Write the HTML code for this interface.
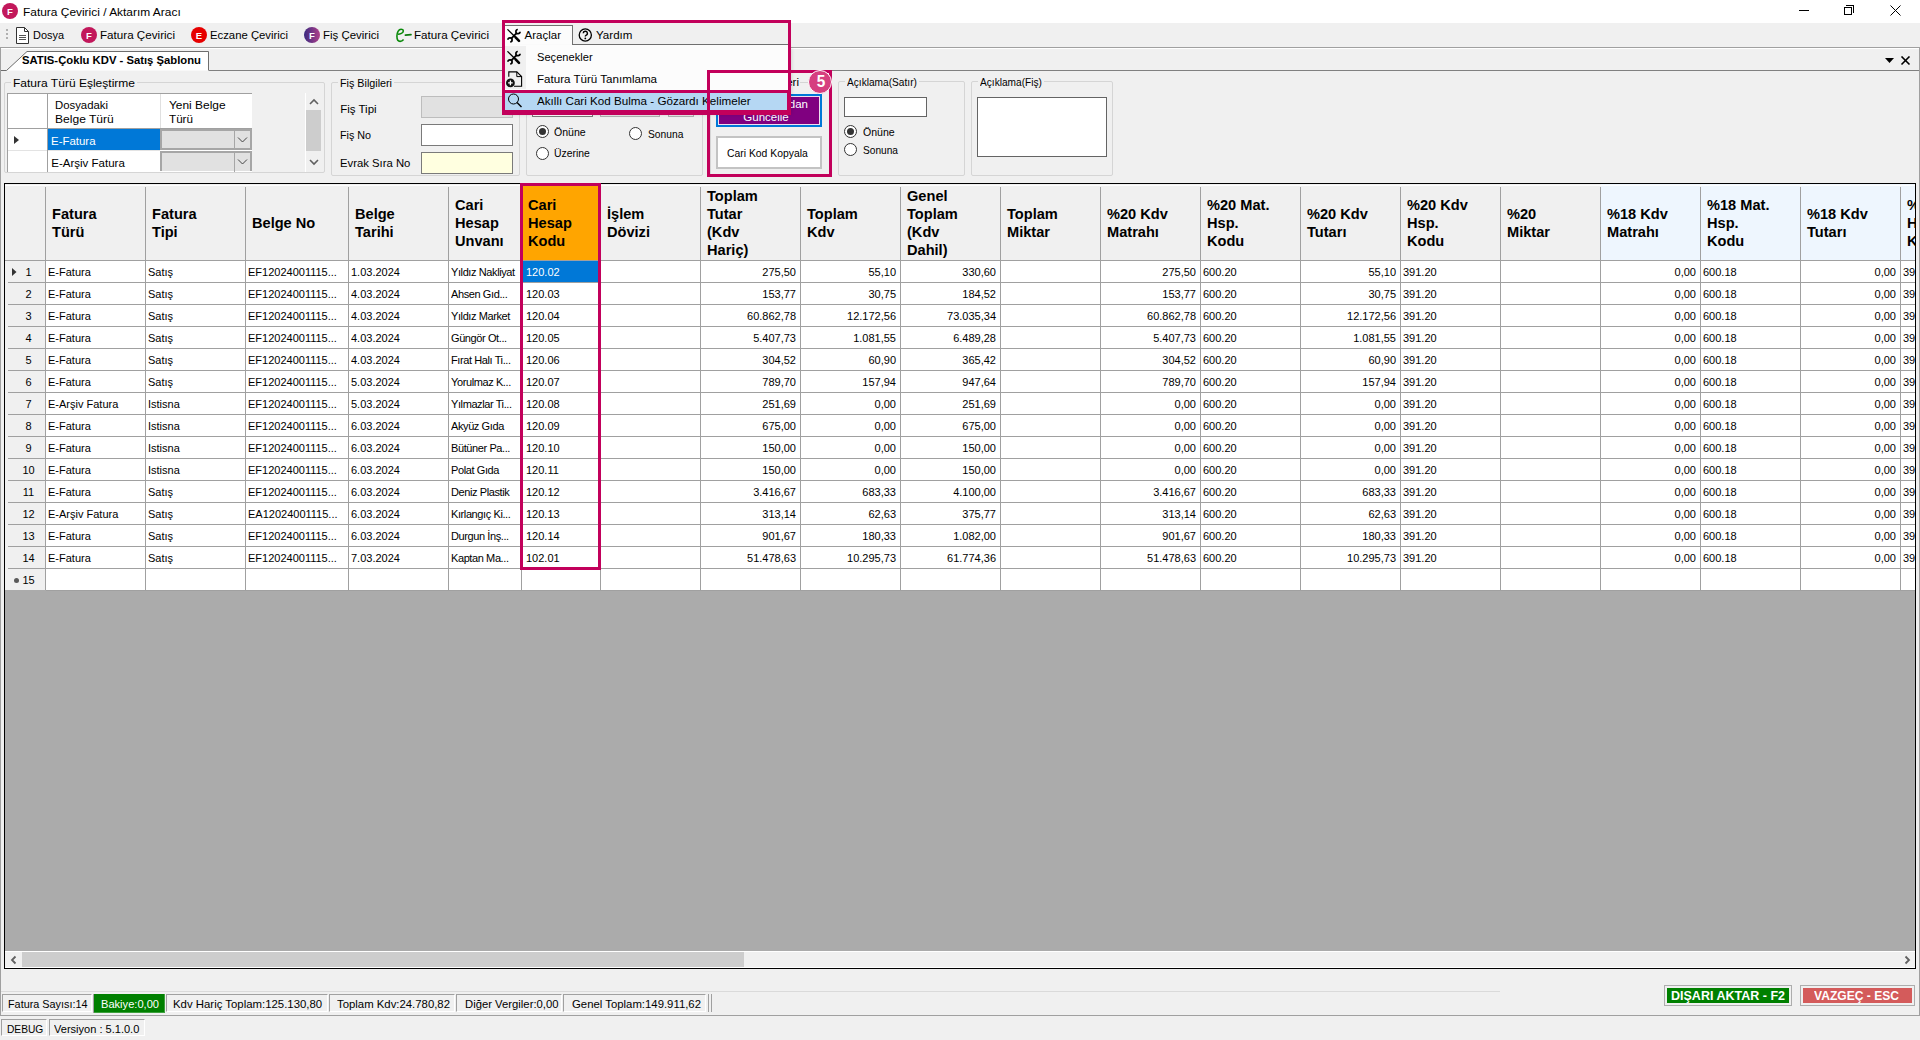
<!DOCTYPE html><html><head><meta charset="utf-8"><style>
html,body{margin:0;padding:0;}
body{width:1920px;height:1040px;overflow:hidden;position:relative;background:#f0f0f0;font-family:"Liberation Sans",sans-serif;color:#000;}
div{position:absolute;box-sizing:border-box;}
.t{white-space:nowrap;}
svg{position:absolute;}

</style></head><body>
<div style="left:0px;top:0px;width:1920px;height:23px;background:#fff;"></div>
<div style="left:2px;top:3px;width:16px;height:16px;border-radius:50%;background:#c2185b;"></div>
<div class="t" style="left:2px;top:3px;width:16px;text-align:center;font-weight:bold;font-size:9.5px;line-height:17px;color:#fff;">F</div>
<div class="t" style="left:23px;top:3.61px;font-size:11.5px;line-height:16px;transform:scaleX(1.0368);transform-origin:0 0;">Fatura Çevirici / Aktarım Aracı</div>
<div style="left:1799px;top:10px;width:10px;height:1px;background:#000;"></div>
<div style="left:1844px;top:7px;width:8px;height:8px;border:1px solid #000;"></div>
<div style="left:1846px;top:5px;width:8px;height:8px;border-top:1px solid #000;border-right:1px solid #000;"></div>
<svg style="left:1890px;top:5px" width="11" height="11"><path d="M0.5 0.5L10.5 10.5M10.5 0.5L0.5 10.5" stroke="#000" stroke-width="1"/></svg>
<div style="left:6px;top:29px;width:2px;height:2px;background:#b0b0b0;"></div>
<div style="left:6px;top:33px;width:2px;height:2px;background:#b0b0b0;"></div>
<div style="left:6px;top:37px;width:2px;height:2px;background:#b0b0b0;"></div>
<svg style="left:16px;top:27px" width="13" height="17"><path d="M0.5 0.5H8.5L12.5 4.5V16.5H0.5Z" fill="#fff" stroke="#333" stroke-width="1"/><path d="M8.5 0.5V4.5H12.5" fill="none" stroke="#333"/><path d="M3 8.5H10M3 10.5H10M3 12.5H10" stroke="#555" stroke-width="1"/></svg>
<div class="t" style="left:33px;top:26.81px;font-size:11.5px;line-height:16px;transform:scaleX(0.9506);transform-origin:0 0;">Dosya</div>
<div style="left:81px;top:27px;width:16px;height:16px;border-radius:50%;background:#c2185b;"></div>
<div class="t" style="left:81px;top:27px;width:16px;text-align:center;font-weight:bold;font-size:9.5px;line-height:17px;color:#fff;">F</div>
<div class="t" style="left:100px;top:26.81px;font-size:11.5px;line-height:16px;transform:scaleX(1.0116);transform-origin:0 0;">Fatura Çevirici</div>
<div style="left:191px;top:27px;width:16px;height:16px;border-radius:50%;background:#e60000;"></div>
<div class="t" style="left:191px;top:27px;width:16px;text-align:center;font-weight:bold;font-size:9.5px;line-height:17px;color:#fff;">E</div>
<div class="t" style="left:210px;top:26.81px;font-size:11.5px;line-height:16px;transform:scaleX(0.9842);transform-origin:0 0;">Eczane Çevirici</div>
<div style="left:304px;top:27px;width:16px;height:16px;border-radius:50%;background:linear-gradient(90deg,#3a2a80,#b0408a);"></div>
<div class="t" style="left:304px;top:27px;width:16px;text-align:center;font-weight:bold;font-size:9.5px;line-height:17px;color:#fff;">F</div>
<div class="t" style="left:323px;top:26.81px;font-size:11.5px;line-height:16px;transform:scaleX(0.9958);transform-origin:0 0;">Fiş Çevirici</div>
<svg style="left:395px;top:28px" width="17" height="15"><path d="M3 6.3C5 6.3 8.3 5 8.3 2.9C8.3 1.6 7.2 1.2 6.1 1.2C3.6 1.2 1.9 4.5 1.9 8C1.9 11.5 3.1 13.4 5.1 13.4C6.6 13.4 7.8 12.6 8.6 11.6" fill="none" stroke="#0b8a0b" stroke-width="1.6"/><path d="M10.4 7.1L16 6.6" stroke="#0b7a0b" stroke-width="1.7" stroke-linecap="round"/></svg>
<div class="t" style="left:414px;top:26.81px;font-size:11.5px;line-height:16px;transform:scaleX(1.0116);transform-origin:0 0;">Fatura Çevirici</div>
<div style="left:0px;top:47px;width:1920px;height:969px;border:1px solid #a0a0a0;"></div>
<div style="left:1px;top:48px;width:1918px;height:1px;background:#fff;"></div>
<svg style="left:0;top:47px" width="220" height="26"><path d="M1 23.5H6.5L27 4.5H208.5V23.5" fill="#fff" stroke="none"/><path d="M1 23.5H6.5L27 4.5H208.5V23.5" fill="none" stroke="#6d6d6d" stroke-width="1"/></svg>
<div style="left:209px;top:70px;width:1710px;height:1px;background:#808080;"></div>
<div class="t" style="left:22px;top:51.68px;font-size:11.6px;line-height:16px;font-weight:bold;transform:scaleX(0.9727);transform-origin:0 0;">SATIS-Çoklu KDV - Satış Şablonu</div>
<svg style="left:1884px;top:56px" width="28" height="10"><path d="M1 2H10L5.5 7Z" fill="#000"/><path d="M17.5 0.5L25.5 8.5M25.5 0.5L17.5 8.5" stroke="#000" stroke-width="1.6"/></svg>
<div style="left:4px;top:82px;width:321px;height:91px;border:1px solid #d5d5d5;border-radius:2px;"></div>
<div style="left:11px;top:80px;width:126px;height:5px;background:#f0f0f0;"></div>
<div class="t" style="left:13px;top:75.11px;font-size:11.5px;line-height:16px;transform:scaleX(1.045);transform-origin:0 0;">Fatura Türü Eşleştirme</div>
<div style="left:7px;top:93px;width:245px;height:79px;background:#fff;border-top:1px solid #a0a0a0;border-left:1px solid #a0a0a0;"></div>
<div style="left:47px;top:94px;width:1px;height:78px;background:#a0a0a0;"></div>
<div style="left:160px;top:94px;width:1px;height:34px;background:#e0e0e0;"></div>
<div style="left:8px;top:128px;width:244px;height:1px;background:#a0a0a0;"></div>
<div class="t" style="left:55.4px;top:97.01px;font-size:11.5px;line-height:16px;transform:scaleX(0.9869);transform-origin:0 0;">Dosyadaki</div>
<div class="t" style="left:55.4px;top:110.91px;font-size:11.5px;line-height:16px;transform:scaleX(1.0491);transform-origin:0 0;">Belge Türü</div>
<div class="t" style="left:169px;top:97.01px;font-size:11.5px;line-height:16px;transform:scaleX(1.037);transform-origin:0 0;">Yeni Belge</div>
<div class="t" style="left:169px;top:110.91px;font-size:11.5px;line-height:16px;transform:scaleX(1.0145);transform-origin:0 0;">Türü</div>
<div style="left:48px;top:129px;width:112px;height:21px;background:#0078d7;"></div>
<div class="t" style="left:51.3px;top:133.41px;font-size:11.5px;line-height:16px;transform:scaleX(0.9944);transform-origin:0 0;color:#fff;">E-Fatura</div>
<div style="left:8px;top:150px;width:39px;height:1px;background:#e3e3e3;"></div>
<div style="left:48px;top:150px;width:112px;height:1px;background:#e3e3e3;"></div>
<div class="t" style="left:51.3px;top:154.71px;font-size:11.5px;line-height:16px;">E-Arşiv Fatura</div>
<svg style="left:13px;top:135px" width="8" height="10"><path d="M1 1L6 5L1 9Z" fill="#333"/></svg>
<div style="left:160px;top:129px;width:92px;height:21px;background:#e1e1e1;border:2px solid #a6a6a6;"></div>
<div style="left:234px;top:131px;width:1px;height:19px;background:#a6a6a6;"></div>
<svg style="left:237px;top:136px" width="12" height="8"><path d="M1 1.5L5.5 6L10 1.5" fill="none" stroke="#444" stroke-width="1"/></svg>
<div style="left:160px;top:151px;width:92px;height:20px;background:#e1e1e1;border:2px solid #a6a6a6;border-bottom:0;"></div>
<div style="left:234px;top:153px;width:1px;height:19px;background:#a6a6a6;"></div>
<svg style="left:237px;top:158px" width="12" height="8"><path d="M1 1.5L5.5 6L10 1.5" fill="none" stroke="#444" stroke-width="1"/></svg>
<div style="left:305px;top:93px;width:16px;height:79px;background:#f0f0f0;border-left:1px solid #fff;"></div>
<div style="left:306px;top:110px;width:15px;height:41px;background:#cdcdcd;"></div>
<svg style="left:308px;top:98px" width="12" height="8"><path d="M2 6L6 2L10 6" fill="none" stroke="#606060" stroke-width="1.6"/></svg>
<svg style="left:308px;top:158px" width="12" height="8"><path d="M2 2L6 6L10 2" fill="none" stroke="#606060" stroke-width="1.6"/></svg>
<div style="left:331px;top:82px;width:189px;height:94px;border:1px solid #d5d5d5;border-radius:2px;"></div>
<div style="left:338px;top:80px;width:56px;height:5px;background:#f0f0f0;"></div>
<div class="t" style="left:340px;top:75.11px;font-size:11.5px;line-height:16px;transform:scaleX(0.9354);transform-origin:0 0;">Fiş Bilgileri</div>
<div class="t" style="left:340.2px;top:101.11px;font-size:11.5px;line-height:16px;">Fiş Tipi</div>
<div class="t" style="left:340.2px;top:127.01px;font-size:11.5px;line-height:16px;transform:scaleX(0.9358);transform-origin:0 0;">Fiş No</div>
<div class="t" style="left:340.2px;top:154.71px;font-size:11.5px;line-height:16px;transform:scaleX(0.9835);transform-origin:0 0;">Evrak Sıra No</div>
<div style="left:421px;top:96px;width:92px;height:22px;background:#e1e1e1;border:1px solid #bdbdbd;"></div>
<div style="left:421px;top:124px;width:92px;height:22px;background:#fff;border:1px solid #7a7a7a;"></div>
<div style="left:421px;top:152px;width:92px;height:22px;background:#ffffe0;border:1px solid #7a7a7a;"></div>
<div style="left:526px;top:82px;width:177px;height:94px;border:1px solid #d5d5d5;border-radius:2px;"></div>
<div style="left:532px;top:97px;width:61px;height:20px;background:#fff;border:1px solid #7a7a7a;"></div>
<div style="left:600px;top:97px;width:60px;height:20px;background:#e8e8e8;border:1px solid #b0b0b0;"></div>
<div style="left:668px;top:97px;width:26px;height:20px;background:#e8e8e8;border:1px solid #b0b0b0;"></div>
<div style="left:536.0px;top:125.0px;width:13px;height:13px;border:1px solid #333;border-radius:50%;background:#fff;"></div>
<div style="left:539.0px;top:128.0px;width:7px;height:7px;border-radius:50%;background:#333;"></div>
<div class="t" style="left:554.4px;top:123.81px;font-size:11.5px;line-height:16px;transform:scaleX(0.918);transform-origin:0 0;">Önüne</div>
<div style="left:629.0px;top:127.0px;width:13px;height:13px;border:1px solid #333;border-radius:50%;background:#fff;"></div>
<div class="t" style="left:647.6px;top:125.91px;font-size:11.5px;line-height:16px;transform:scaleX(0.8927);transform-origin:0 0;">Sonuna</div>
<div style="left:536.0px;top:147.0px;width:13px;height:13px;border:1px solid #333;border-radius:50%;background:#fff;"></div>
<div class="t" style="left:554.4px;top:145.41px;font-size:11.5px;line-height:16px;transform:scaleX(0.9056);transform-origin:0 0;">Üzerine</div>
<div style="left:710px;top:82px;width:120px;height:94px;border:1px solid #d5d5d5;border-radius:2px;"></div>
<div class="t" style="left:741px;top:74px;width:59px;text-align:right;font-size:11.5px;line-height:16px;background:#f0f0f0;padding-right:1px;">İşlemleri</div>
<div style="left:716px;top:94px;width:106px;height:33px;background:#800080;border:2px solid #0078d7;box-shadow:inset 0 0 0 1px #f0e0f0;"></div>
<div class="t" style="left:700px;top:95.5px;width:108px;text-align:right;font-size:11.5px;line-height:16px;color:#fff;">Koddan</div>
<div class="t" style="left:713px;top:108.5px;width:106px;text-align:center;font-size:11.5px;line-height:16px;color:#fff;">Güncelle</div>
<div style="left:716px;top:136px;width:106px;height:33px;background:#fff;border:2px solid #c3c3c3;"></div>
<div class="t" style="left:727.4px;top:144.89px;font-size:11px;line-height:16px;transform:scaleX(0.9438);transform-origin:0 0;">Cari Kod Kopyala</div>
<div style="left:838px;top:81px;width:127px;height:95px;border:1px solid #d5d5d5;border-radius:2px;"></div>
<div style="left:845.2px;top:79px;width:73.9px;height:5px;background:#f0f0f0;"></div>
<div class="t" style="left:847.2px;top:73.61px;font-size:11.5px;line-height:16px;transform:scaleX(0.882);transform-origin:0 0;">Açıklama(Satır)</div>
<div style="left:844px;top:97px;width:83px;height:20px;background:#fff;border:1px solid #646464;"></div>
<div style="left:844.0px;top:125.0px;width:13px;height:13px;border:1px solid #333;border-radius:50%;background:#fff;"></div>
<div style="left:847.0px;top:128.0px;width:7px;height:7px;border-radius:50%;background:#333;"></div>
<div class="t" style="left:862.5px;top:123.61px;font-size:11.5px;line-height:16px;transform:scaleX(0.918);transform-origin:0 0;">Önüne</div>
<div style="left:844.0px;top:143.0px;width:13px;height:13px;border:1px solid #333;border-radius:50%;background:#fff;"></div>
<div class="t" style="left:862.5px;top:141.81px;font-size:11.5px;line-height:16px;transform:scaleX(0.8826);transform-origin:0 0;">Sonuna</div>
<div style="left:971px;top:81px;width:142px;height:95px;border:1px solid #d5d5d5;border-radius:2px;"></div>
<div style="left:978.3px;top:79px;width:65.9px;height:5px;background:#f0f0f0;"></div>
<div class="t" style="left:980.3px;top:73.61px;font-size:11.5px;line-height:16px;transform:scaleX(0.8807);transform-origin:0 0;">Açıklama(Fiş)</div>
<div style="left:977px;top:97px;width:130px;height:60px;background:#fff;border:1px solid #646464;"></div>
<div style="left:4px;top:183px;width:1912px;height:786px;border:1px solid #000;background:#ababab;overflow:hidden;"></div>
<div style="left:5px;top:184px;width:40px;height:76px;background:#f0f0f0;"></div>
<div style="position:absolute;left:5px;top:184px;width:1910px;height:784px;overflow:hidden;">
<div style="position:absolute;left:0px;top:0px;width:1910px;height:76px;background:#f0f0f0;"></div>
<div style="position:absolute;left:41px;top:0px;width:99px;height:76px;background:#f0f0f0;"></div>
<div style="position:absolute;left:47px;top:20.5px;width:92px;height:36px;font-weight:bold;font-size:14.6px;line-height:18px;white-space:nowrap;">Fatura<br>Türü</div>
<div style="position:absolute;left:40px;top:3px;width:1px;height:73px;background:#a0a0a0;"></div>
<div style="position:absolute;left:141px;top:0px;width:99px;height:76px;background:#f0f0f0;"></div>
<div style="position:absolute;left:147px;top:20.5px;width:92px;height:36px;font-weight:bold;font-size:14.6px;line-height:18px;white-space:nowrap;">Fatura<br>Tipi</div>
<div style="position:absolute;left:140px;top:3px;width:1px;height:73px;background:#a0a0a0;"></div>
<div style="position:absolute;left:241px;top:0px;width:102px;height:76px;background:#f0f0f0;"></div>
<div style="position:absolute;left:247px;top:29.5px;width:95px;height:18px;font-weight:bold;font-size:14.6px;line-height:18px;white-space:nowrap;">Belge No</div>
<div style="position:absolute;left:240px;top:3px;width:1px;height:73px;background:#a0a0a0;"></div>
<div style="position:absolute;left:344px;top:0px;width:99px;height:76px;background:#f0f0f0;"></div>
<div style="position:absolute;left:350px;top:20.5px;width:92px;height:36px;font-weight:bold;font-size:14.6px;line-height:18px;white-space:nowrap;">Belge<br>Tarihi</div>
<div style="position:absolute;left:343px;top:3px;width:1px;height:73px;background:#a0a0a0;"></div>
<div style="position:absolute;left:444px;top:0px;width:72px;height:76px;background:#f0f0f0;"></div>
<div style="position:absolute;left:450px;top:11.5px;width:65px;height:54px;font-weight:bold;font-size:14.6px;line-height:18px;white-space:nowrap;">Cari<br>Hesap<br>Unvanı</div>
<div style="position:absolute;left:443px;top:3px;width:1px;height:73px;background:#a0a0a0;"></div>
<div style="position:absolute;left:517px;top:0px;width:78px;height:76px;background:#ffa500;"></div>
<div style="position:absolute;left:523px;top:11.5px;width:71px;height:54px;font-weight:bold;font-size:14.6px;line-height:18px;white-space:nowrap;">Cari<br>Hesap<br>Kodu</div>
<div style="position:absolute;left:516px;top:3px;width:1px;height:73px;background:#a0a0a0;"></div>
<div style="position:absolute;left:596px;top:0px;width:99px;height:76px;background:#f0f0f0;"></div>
<div style="position:absolute;left:602px;top:20.5px;width:92px;height:36px;font-weight:bold;font-size:14.6px;line-height:18px;white-space:nowrap;">İşlem<br>Dövizi</div>
<div style="position:absolute;left:595px;top:3px;width:1px;height:73px;background:#a0a0a0;"></div>
<div style="position:absolute;left:696px;top:0px;width:99px;height:76px;background:#f0f0f0;"></div>
<div style="position:absolute;left:702px;top:2.5px;width:92px;height:72px;font-weight:bold;font-size:14.6px;line-height:18px;white-space:nowrap;">Toplam<br>Tutar<br>(Kdv<br>Hariç)</div>
<div style="position:absolute;left:695px;top:3px;width:1px;height:73px;background:#a0a0a0;"></div>
<div style="position:absolute;left:796px;top:0px;width:99px;height:76px;background:#f0f0f0;"></div>
<div style="position:absolute;left:802px;top:20.5px;width:92px;height:36px;font-weight:bold;font-size:14.6px;line-height:18px;white-space:nowrap;">Toplam<br>Kdv</div>
<div style="position:absolute;left:795px;top:3px;width:1px;height:73px;background:#a0a0a0;"></div>
<div style="position:absolute;left:896px;top:0px;width:99px;height:76px;background:#f0f0f0;"></div>
<div style="position:absolute;left:902px;top:2.5px;width:92px;height:72px;font-weight:bold;font-size:14.6px;line-height:18px;white-space:nowrap;">Genel<br>Toplam<br>(Kdv<br>Dahil)</div>
<div style="position:absolute;left:895px;top:3px;width:1px;height:73px;background:#a0a0a0;"></div>
<div style="position:absolute;left:996px;top:0px;width:99px;height:76px;background:#f0f0f0;"></div>
<div style="position:absolute;left:1002px;top:20.5px;width:92px;height:36px;font-weight:bold;font-size:14.6px;line-height:18px;white-space:nowrap;">Toplam<br>Miktar</div>
<div style="position:absolute;left:995px;top:3px;width:1px;height:73px;background:#a0a0a0;"></div>
<div style="position:absolute;left:1096px;top:0px;width:99px;height:76px;background:#f0f0f0;"></div>
<div style="position:absolute;left:1102px;top:20.5px;width:92px;height:36px;font-weight:bold;font-size:14.6px;line-height:18px;white-space:nowrap;">%20 Kdv<br>Matrahı</div>
<div style="position:absolute;left:1095px;top:3px;width:1px;height:73px;background:#a0a0a0;"></div>
<div style="position:absolute;left:1196px;top:0px;width:99px;height:76px;background:#f0f0f0;"></div>
<div style="position:absolute;left:1202px;top:11.5px;width:92px;height:54px;font-weight:bold;font-size:14.6px;line-height:18px;white-space:nowrap;">%20 Mat.<br>Hsp.<br>Kodu</div>
<div style="position:absolute;left:1195px;top:3px;width:1px;height:73px;background:#a0a0a0;"></div>
<div style="position:absolute;left:1296px;top:0px;width:99px;height:76px;background:#f0f0f0;"></div>
<div style="position:absolute;left:1302px;top:20.5px;width:92px;height:36px;font-weight:bold;font-size:14.6px;line-height:18px;white-space:nowrap;">%20 Kdv<br>Tutarı</div>
<div style="position:absolute;left:1295px;top:3px;width:1px;height:73px;background:#a0a0a0;"></div>
<div style="position:absolute;left:1396px;top:0px;width:99px;height:76px;background:#f0f0f0;"></div>
<div style="position:absolute;left:1402px;top:11.5px;width:92px;height:54px;font-weight:bold;font-size:14.6px;line-height:18px;white-space:nowrap;">%20 Kdv<br>Hsp.<br>Kodu</div>
<div style="position:absolute;left:1395px;top:3px;width:1px;height:73px;background:#a0a0a0;"></div>
<div style="position:absolute;left:1496px;top:0px;width:99px;height:76px;background:#f0f0f0;"></div>
<div style="position:absolute;left:1502px;top:20.5px;width:92px;height:36px;font-weight:bold;font-size:14.6px;line-height:18px;white-space:nowrap;">%20<br>Miktar</div>
<div style="position:absolute;left:1495px;top:3px;width:1px;height:73px;background:#a0a0a0;"></div>
<div style="position:absolute;left:1596px;top:0px;width:99px;height:76px;background:#eef6fe;"></div>
<div style="position:absolute;left:1602px;top:20.5px;width:92px;height:36px;font-weight:bold;font-size:14.6px;line-height:18px;white-space:nowrap;">%18 Kdv<br>Matrahı</div>
<div style="position:absolute;left:1595px;top:3px;width:1px;height:73px;background:#a0a0a0;"></div>
<div style="position:absolute;left:1696px;top:0px;width:99px;height:76px;background:#eef6fe;"></div>
<div style="position:absolute;left:1702px;top:11.5px;width:92px;height:54px;font-weight:bold;font-size:14.6px;line-height:18px;white-space:nowrap;">%18 Mat.<br>Hsp.<br>Kodu</div>
<div style="position:absolute;left:1695px;top:3px;width:1px;height:73px;background:#a0a0a0;"></div>
<div style="position:absolute;left:1796px;top:0px;width:99px;height:76px;background:#eef6fe;"></div>
<div style="position:absolute;left:1802px;top:20.5px;width:92px;height:36px;font-weight:bold;font-size:14.6px;line-height:18px;white-space:nowrap;">%18 Kdv<br>Tutarı</div>
<div style="position:absolute;left:1795px;top:3px;width:1px;height:73px;background:#a0a0a0;"></div>
<div style="position:absolute;left:1896px;top:0px;width:99px;height:76px;background:#eef6fe;"></div>
<div style="position:absolute;left:1902px;top:11.5px;width:92px;height:54px;font-weight:bold;font-size:14.6px;line-height:18px;white-space:nowrap;">%18 Kdv<br>Hsp.<br>Kodu</div>
<div style="position:absolute;left:1895px;top:3px;width:1px;height:73px;background:#a0a0a0;"></div>
<div style="position:absolute;left:0px;top:76px;width:1910px;height:1px;background:#a0a0a0;"></div>
<div style="position:absolute;left:0px;top:1px;width:1910px;height:1px;background:rgba(255,255,255,0.85);"></div>
<div style="position:absolute;left:41px;top:77px;width:1869px;height:329px;background:#fff;"></div>
<div style="position:absolute;left:0px;top:77px;width:40px;height:329px;background:#f0f0f0;"></div>
<div style="position:absolute;left:11px;top:77px;width:25px;height:21px;text-align:center;font-size:11px;line-height:22px;">1</div>
<div style="position:absolute;left:3px;top:98px;width:37px;height:1px;background:#a0a0a0;"></div>
<div style="position:absolute;left:41px;top:98px;width:1869px;height:1px;background:#a0a0a0;"></div>
<div style="position:absolute;left:43px;top:77px;width:97px;height:21px;font-size:11px;line-height:22px;white-space:nowrap;overflow:hidden;color:#000;">E-Fatura</div>
<div style="position:absolute;left:143px;top:77px;width:97px;height:21px;font-size:11px;line-height:22px;white-space:nowrap;overflow:hidden;color:#000;">Satış</div>
<div style="position:absolute;left:243px;top:77px;width:100px;height:21px;font-size:11px;line-height:22px;white-space:nowrap;overflow:hidden;color:#000;">EF12024001115...</div>
<div style="position:absolute;left:346px;top:77px;width:97px;height:21px;font-size:11px;line-height:22px;white-space:nowrap;overflow:hidden;color:#000;">1.03.2024</div>
<div style="position:absolute;left:446px;top:77px;width:70px;height:21px;font-size:11px;line-height:22px;white-space:nowrap;overflow:hidden;color:#000;letter-spacing:-0.4px;">Yıldız Nakliyat</div>
<div style="position:absolute;left:518px;top:77px;width:77px;height:21px;background:#0078d7;"></div>
<div style="position:absolute;left:521px;top:77px;width:74px;height:21px;font-size:11px;line-height:22px;white-space:nowrap;overflow:hidden;color:#fff;">120.02</div>
<div style="position:absolute;left:696px;top:77px;width:95px;height:21px;text-align:right;font-size:11px;line-height:22px;white-space:nowrap;color:#000;">275,50</div>
<div style="position:absolute;left:796px;top:77px;width:95px;height:21px;text-align:right;font-size:11px;line-height:22px;white-space:nowrap;color:#000;">55,10</div>
<div style="position:absolute;left:896px;top:77px;width:95px;height:21px;text-align:right;font-size:11px;line-height:22px;white-space:nowrap;color:#000;">330,60</div>
<div style="position:absolute;left:1096px;top:77px;width:95px;height:21px;text-align:right;font-size:11px;line-height:22px;white-space:nowrap;color:#000;">275,50</div>
<div style="position:absolute;left:1198px;top:77px;width:97px;height:21px;font-size:11px;line-height:22px;white-space:nowrap;overflow:hidden;color:#000;">600.20</div>
<div style="position:absolute;left:1296px;top:77px;width:95px;height:21px;text-align:right;font-size:11px;line-height:22px;white-space:nowrap;color:#000;">55,10</div>
<div style="position:absolute;left:1398px;top:77px;width:97px;height:21px;font-size:11px;line-height:22px;white-space:nowrap;overflow:hidden;color:#000;">391.20</div>
<div style="position:absolute;left:1596px;top:77px;width:95px;height:21px;text-align:right;font-size:11px;line-height:22px;white-space:nowrap;color:#000;">0,00</div>
<div style="position:absolute;left:1698px;top:77px;width:97px;height:21px;font-size:11px;line-height:22px;white-space:nowrap;overflow:hidden;color:#000;">600.18</div>
<div style="position:absolute;left:1796px;top:77px;width:95px;height:21px;text-align:right;font-size:11px;line-height:22px;white-space:nowrap;color:#000;">0,00</div>
<div style="position:absolute;left:1898px;top:77px;width:97px;height:21px;font-size:11px;line-height:22px;white-space:nowrap;overflow:hidden;color:#000;">39</div>
<div style="position:absolute;left:11px;top:99px;width:25px;height:21px;text-align:center;font-size:11px;line-height:22px;">2</div>
<div style="position:absolute;left:3px;top:120px;width:37px;height:1px;background:#a0a0a0;"></div>
<div style="position:absolute;left:41px;top:120px;width:1869px;height:1px;background:#a0a0a0;"></div>
<div style="position:absolute;left:43px;top:99px;width:97px;height:21px;font-size:11px;line-height:22px;white-space:nowrap;overflow:hidden;color:#000;">E-Fatura</div>
<div style="position:absolute;left:143px;top:99px;width:97px;height:21px;font-size:11px;line-height:22px;white-space:nowrap;overflow:hidden;color:#000;">Satış</div>
<div style="position:absolute;left:243px;top:99px;width:100px;height:21px;font-size:11px;line-height:22px;white-space:nowrap;overflow:hidden;color:#000;">EF12024001115...</div>
<div style="position:absolute;left:346px;top:99px;width:97px;height:21px;font-size:11px;line-height:22px;white-space:nowrap;overflow:hidden;color:#000;">4.03.2024</div>
<div style="position:absolute;left:446px;top:99px;width:70px;height:21px;font-size:11px;line-height:22px;white-space:nowrap;overflow:hidden;color:#000;letter-spacing:-0.4px;">Ahsen Gıd...</div>
<div style="position:absolute;left:521px;top:99px;width:74px;height:21px;font-size:11px;line-height:22px;white-space:nowrap;overflow:hidden;color:#000;">120.03</div>
<div style="position:absolute;left:696px;top:99px;width:95px;height:21px;text-align:right;font-size:11px;line-height:22px;white-space:nowrap;color:#000;">153,77</div>
<div style="position:absolute;left:796px;top:99px;width:95px;height:21px;text-align:right;font-size:11px;line-height:22px;white-space:nowrap;color:#000;">30,75</div>
<div style="position:absolute;left:896px;top:99px;width:95px;height:21px;text-align:right;font-size:11px;line-height:22px;white-space:nowrap;color:#000;">184,52</div>
<div style="position:absolute;left:1096px;top:99px;width:95px;height:21px;text-align:right;font-size:11px;line-height:22px;white-space:nowrap;color:#000;">153,77</div>
<div style="position:absolute;left:1198px;top:99px;width:97px;height:21px;font-size:11px;line-height:22px;white-space:nowrap;overflow:hidden;color:#000;">600.20</div>
<div style="position:absolute;left:1296px;top:99px;width:95px;height:21px;text-align:right;font-size:11px;line-height:22px;white-space:nowrap;color:#000;">30,75</div>
<div style="position:absolute;left:1398px;top:99px;width:97px;height:21px;font-size:11px;line-height:22px;white-space:nowrap;overflow:hidden;color:#000;">391.20</div>
<div style="position:absolute;left:1596px;top:99px;width:95px;height:21px;text-align:right;font-size:11px;line-height:22px;white-space:nowrap;color:#000;">0,00</div>
<div style="position:absolute;left:1698px;top:99px;width:97px;height:21px;font-size:11px;line-height:22px;white-space:nowrap;overflow:hidden;color:#000;">600.18</div>
<div style="position:absolute;left:1796px;top:99px;width:95px;height:21px;text-align:right;font-size:11px;line-height:22px;white-space:nowrap;color:#000;">0,00</div>
<div style="position:absolute;left:1898px;top:99px;width:97px;height:21px;font-size:11px;line-height:22px;white-space:nowrap;overflow:hidden;color:#000;">39</div>
<div style="position:absolute;left:11px;top:121px;width:25px;height:21px;text-align:center;font-size:11px;line-height:22px;">3</div>
<div style="position:absolute;left:3px;top:142px;width:37px;height:1px;background:#a0a0a0;"></div>
<div style="position:absolute;left:41px;top:142px;width:1869px;height:1px;background:#a0a0a0;"></div>
<div style="position:absolute;left:43px;top:121px;width:97px;height:21px;font-size:11px;line-height:22px;white-space:nowrap;overflow:hidden;color:#000;">E-Fatura</div>
<div style="position:absolute;left:143px;top:121px;width:97px;height:21px;font-size:11px;line-height:22px;white-space:nowrap;overflow:hidden;color:#000;">Satış</div>
<div style="position:absolute;left:243px;top:121px;width:100px;height:21px;font-size:11px;line-height:22px;white-space:nowrap;overflow:hidden;color:#000;">EF12024001115...</div>
<div style="position:absolute;left:346px;top:121px;width:97px;height:21px;font-size:11px;line-height:22px;white-space:nowrap;overflow:hidden;color:#000;">4.03.2024</div>
<div style="position:absolute;left:446px;top:121px;width:70px;height:21px;font-size:11px;line-height:22px;white-space:nowrap;overflow:hidden;color:#000;letter-spacing:-0.4px;">Yıldız Market</div>
<div style="position:absolute;left:521px;top:121px;width:74px;height:21px;font-size:11px;line-height:22px;white-space:nowrap;overflow:hidden;color:#000;">120.04</div>
<div style="position:absolute;left:696px;top:121px;width:95px;height:21px;text-align:right;font-size:11px;line-height:22px;white-space:nowrap;color:#000;">60.862,78</div>
<div style="position:absolute;left:796px;top:121px;width:95px;height:21px;text-align:right;font-size:11px;line-height:22px;white-space:nowrap;color:#000;">12.172,56</div>
<div style="position:absolute;left:896px;top:121px;width:95px;height:21px;text-align:right;font-size:11px;line-height:22px;white-space:nowrap;color:#000;">73.035,34</div>
<div style="position:absolute;left:1096px;top:121px;width:95px;height:21px;text-align:right;font-size:11px;line-height:22px;white-space:nowrap;color:#000;">60.862,78</div>
<div style="position:absolute;left:1198px;top:121px;width:97px;height:21px;font-size:11px;line-height:22px;white-space:nowrap;overflow:hidden;color:#000;">600.20</div>
<div style="position:absolute;left:1296px;top:121px;width:95px;height:21px;text-align:right;font-size:11px;line-height:22px;white-space:nowrap;color:#000;">12.172,56</div>
<div style="position:absolute;left:1398px;top:121px;width:97px;height:21px;font-size:11px;line-height:22px;white-space:nowrap;overflow:hidden;color:#000;">391.20</div>
<div style="position:absolute;left:1596px;top:121px;width:95px;height:21px;text-align:right;font-size:11px;line-height:22px;white-space:nowrap;color:#000;">0,00</div>
<div style="position:absolute;left:1698px;top:121px;width:97px;height:21px;font-size:11px;line-height:22px;white-space:nowrap;overflow:hidden;color:#000;">600.18</div>
<div style="position:absolute;left:1796px;top:121px;width:95px;height:21px;text-align:right;font-size:11px;line-height:22px;white-space:nowrap;color:#000;">0,00</div>
<div style="position:absolute;left:1898px;top:121px;width:97px;height:21px;font-size:11px;line-height:22px;white-space:nowrap;overflow:hidden;color:#000;">39</div>
<div style="position:absolute;left:11px;top:143px;width:25px;height:21px;text-align:center;font-size:11px;line-height:22px;">4</div>
<div style="position:absolute;left:3px;top:164px;width:37px;height:1px;background:#a0a0a0;"></div>
<div style="position:absolute;left:41px;top:164px;width:1869px;height:1px;background:#a0a0a0;"></div>
<div style="position:absolute;left:43px;top:143px;width:97px;height:21px;font-size:11px;line-height:22px;white-space:nowrap;overflow:hidden;color:#000;">E-Fatura</div>
<div style="position:absolute;left:143px;top:143px;width:97px;height:21px;font-size:11px;line-height:22px;white-space:nowrap;overflow:hidden;color:#000;">Satış</div>
<div style="position:absolute;left:243px;top:143px;width:100px;height:21px;font-size:11px;line-height:22px;white-space:nowrap;overflow:hidden;color:#000;">EF12024001115...</div>
<div style="position:absolute;left:346px;top:143px;width:97px;height:21px;font-size:11px;line-height:22px;white-space:nowrap;overflow:hidden;color:#000;">4.03.2024</div>
<div style="position:absolute;left:446px;top:143px;width:70px;height:21px;font-size:11px;line-height:22px;white-space:nowrap;overflow:hidden;color:#000;letter-spacing:-0.4px;">Güngör Ot...</div>
<div style="position:absolute;left:521px;top:143px;width:74px;height:21px;font-size:11px;line-height:22px;white-space:nowrap;overflow:hidden;color:#000;">120.05</div>
<div style="position:absolute;left:696px;top:143px;width:95px;height:21px;text-align:right;font-size:11px;line-height:22px;white-space:nowrap;color:#000;">5.407,73</div>
<div style="position:absolute;left:796px;top:143px;width:95px;height:21px;text-align:right;font-size:11px;line-height:22px;white-space:nowrap;color:#000;">1.081,55</div>
<div style="position:absolute;left:896px;top:143px;width:95px;height:21px;text-align:right;font-size:11px;line-height:22px;white-space:nowrap;color:#000;">6.489,28</div>
<div style="position:absolute;left:1096px;top:143px;width:95px;height:21px;text-align:right;font-size:11px;line-height:22px;white-space:nowrap;color:#000;">5.407,73</div>
<div style="position:absolute;left:1198px;top:143px;width:97px;height:21px;font-size:11px;line-height:22px;white-space:nowrap;overflow:hidden;color:#000;">600.20</div>
<div style="position:absolute;left:1296px;top:143px;width:95px;height:21px;text-align:right;font-size:11px;line-height:22px;white-space:nowrap;color:#000;">1.081,55</div>
<div style="position:absolute;left:1398px;top:143px;width:97px;height:21px;font-size:11px;line-height:22px;white-space:nowrap;overflow:hidden;color:#000;">391.20</div>
<div style="position:absolute;left:1596px;top:143px;width:95px;height:21px;text-align:right;font-size:11px;line-height:22px;white-space:nowrap;color:#000;">0,00</div>
<div style="position:absolute;left:1698px;top:143px;width:97px;height:21px;font-size:11px;line-height:22px;white-space:nowrap;overflow:hidden;color:#000;">600.18</div>
<div style="position:absolute;left:1796px;top:143px;width:95px;height:21px;text-align:right;font-size:11px;line-height:22px;white-space:nowrap;color:#000;">0,00</div>
<div style="position:absolute;left:1898px;top:143px;width:97px;height:21px;font-size:11px;line-height:22px;white-space:nowrap;overflow:hidden;color:#000;">39</div>
<div style="position:absolute;left:11px;top:165px;width:25px;height:21px;text-align:center;font-size:11px;line-height:22px;">5</div>
<div style="position:absolute;left:3px;top:186px;width:37px;height:1px;background:#a0a0a0;"></div>
<div style="position:absolute;left:41px;top:186px;width:1869px;height:1px;background:#a0a0a0;"></div>
<div style="position:absolute;left:43px;top:165px;width:97px;height:21px;font-size:11px;line-height:22px;white-space:nowrap;overflow:hidden;color:#000;">E-Fatura</div>
<div style="position:absolute;left:143px;top:165px;width:97px;height:21px;font-size:11px;line-height:22px;white-space:nowrap;overflow:hidden;color:#000;">Satış</div>
<div style="position:absolute;left:243px;top:165px;width:100px;height:21px;font-size:11px;line-height:22px;white-space:nowrap;overflow:hidden;color:#000;">EF12024001115...</div>
<div style="position:absolute;left:346px;top:165px;width:97px;height:21px;font-size:11px;line-height:22px;white-space:nowrap;overflow:hidden;color:#000;">4.03.2024</div>
<div style="position:absolute;left:446px;top:165px;width:70px;height:21px;font-size:11px;line-height:22px;white-space:nowrap;overflow:hidden;color:#000;letter-spacing:-0.4px;">Fırat Halı Ti...</div>
<div style="position:absolute;left:521px;top:165px;width:74px;height:21px;font-size:11px;line-height:22px;white-space:nowrap;overflow:hidden;color:#000;">120.06</div>
<div style="position:absolute;left:696px;top:165px;width:95px;height:21px;text-align:right;font-size:11px;line-height:22px;white-space:nowrap;color:#000;">304,52</div>
<div style="position:absolute;left:796px;top:165px;width:95px;height:21px;text-align:right;font-size:11px;line-height:22px;white-space:nowrap;color:#000;">60,90</div>
<div style="position:absolute;left:896px;top:165px;width:95px;height:21px;text-align:right;font-size:11px;line-height:22px;white-space:nowrap;color:#000;">365,42</div>
<div style="position:absolute;left:1096px;top:165px;width:95px;height:21px;text-align:right;font-size:11px;line-height:22px;white-space:nowrap;color:#000;">304,52</div>
<div style="position:absolute;left:1198px;top:165px;width:97px;height:21px;font-size:11px;line-height:22px;white-space:nowrap;overflow:hidden;color:#000;">600.20</div>
<div style="position:absolute;left:1296px;top:165px;width:95px;height:21px;text-align:right;font-size:11px;line-height:22px;white-space:nowrap;color:#000;">60,90</div>
<div style="position:absolute;left:1398px;top:165px;width:97px;height:21px;font-size:11px;line-height:22px;white-space:nowrap;overflow:hidden;color:#000;">391.20</div>
<div style="position:absolute;left:1596px;top:165px;width:95px;height:21px;text-align:right;font-size:11px;line-height:22px;white-space:nowrap;color:#000;">0,00</div>
<div style="position:absolute;left:1698px;top:165px;width:97px;height:21px;font-size:11px;line-height:22px;white-space:nowrap;overflow:hidden;color:#000;">600.18</div>
<div style="position:absolute;left:1796px;top:165px;width:95px;height:21px;text-align:right;font-size:11px;line-height:22px;white-space:nowrap;color:#000;">0,00</div>
<div style="position:absolute;left:1898px;top:165px;width:97px;height:21px;font-size:11px;line-height:22px;white-space:nowrap;overflow:hidden;color:#000;">39</div>
<div style="position:absolute;left:11px;top:187px;width:25px;height:21px;text-align:center;font-size:11px;line-height:22px;">6</div>
<div style="position:absolute;left:3px;top:208px;width:37px;height:1px;background:#a0a0a0;"></div>
<div style="position:absolute;left:41px;top:208px;width:1869px;height:1px;background:#a0a0a0;"></div>
<div style="position:absolute;left:43px;top:187px;width:97px;height:21px;font-size:11px;line-height:22px;white-space:nowrap;overflow:hidden;color:#000;">E-Fatura</div>
<div style="position:absolute;left:143px;top:187px;width:97px;height:21px;font-size:11px;line-height:22px;white-space:nowrap;overflow:hidden;color:#000;">Satış</div>
<div style="position:absolute;left:243px;top:187px;width:100px;height:21px;font-size:11px;line-height:22px;white-space:nowrap;overflow:hidden;color:#000;">EF12024001115...</div>
<div style="position:absolute;left:346px;top:187px;width:97px;height:21px;font-size:11px;line-height:22px;white-space:nowrap;overflow:hidden;color:#000;">5.03.2024</div>
<div style="position:absolute;left:446px;top:187px;width:70px;height:21px;font-size:11px;line-height:22px;white-space:nowrap;overflow:hidden;color:#000;letter-spacing:-0.4px;">Yorulmaz K...</div>
<div style="position:absolute;left:521px;top:187px;width:74px;height:21px;font-size:11px;line-height:22px;white-space:nowrap;overflow:hidden;color:#000;">120.07</div>
<div style="position:absolute;left:696px;top:187px;width:95px;height:21px;text-align:right;font-size:11px;line-height:22px;white-space:nowrap;color:#000;">789,70</div>
<div style="position:absolute;left:796px;top:187px;width:95px;height:21px;text-align:right;font-size:11px;line-height:22px;white-space:nowrap;color:#000;">157,94</div>
<div style="position:absolute;left:896px;top:187px;width:95px;height:21px;text-align:right;font-size:11px;line-height:22px;white-space:nowrap;color:#000;">947,64</div>
<div style="position:absolute;left:1096px;top:187px;width:95px;height:21px;text-align:right;font-size:11px;line-height:22px;white-space:nowrap;color:#000;">789,70</div>
<div style="position:absolute;left:1198px;top:187px;width:97px;height:21px;font-size:11px;line-height:22px;white-space:nowrap;overflow:hidden;color:#000;">600.20</div>
<div style="position:absolute;left:1296px;top:187px;width:95px;height:21px;text-align:right;font-size:11px;line-height:22px;white-space:nowrap;color:#000;">157,94</div>
<div style="position:absolute;left:1398px;top:187px;width:97px;height:21px;font-size:11px;line-height:22px;white-space:nowrap;overflow:hidden;color:#000;">391.20</div>
<div style="position:absolute;left:1596px;top:187px;width:95px;height:21px;text-align:right;font-size:11px;line-height:22px;white-space:nowrap;color:#000;">0,00</div>
<div style="position:absolute;left:1698px;top:187px;width:97px;height:21px;font-size:11px;line-height:22px;white-space:nowrap;overflow:hidden;color:#000;">600.18</div>
<div style="position:absolute;left:1796px;top:187px;width:95px;height:21px;text-align:right;font-size:11px;line-height:22px;white-space:nowrap;color:#000;">0,00</div>
<div style="position:absolute;left:1898px;top:187px;width:97px;height:21px;font-size:11px;line-height:22px;white-space:nowrap;overflow:hidden;color:#000;">39</div>
<div style="position:absolute;left:11px;top:209px;width:25px;height:21px;text-align:center;font-size:11px;line-height:22px;">7</div>
<div style="position:absolute;left:3px;top:230px;width:37px;height:1px;background:#a0a0a0;"></div>
<div style="position:absolute;left:41px;top:230px;width:1869px;height:1px;background:#a0a0a0;"></div>
<div style="position:absolute;left:43px;top:209px;width:97px;height:21px;font-size:11px;line-height:22px;white-space:nowrap;overflow:hidden;color:#000;">E-Arşiv Fatura</div>
<div style="position:absolute;left:143px;top:209px;width:97px;height:21px;font-size:11px;line-height:22px;white-space:nowrap;overflow:hidden;color:#000;">Istisna</div>
<div style="position:absolute;left:243px;top:209px;width:100px;height:21px;font-size:11px;line-height:22px;white-space:nowrap;overflow:hidden;color:#000;">EF12024001115...</div>
<div style="position:absolute;left:346px;top:209px;width:97px;height:21px;font-size:11px;line-height:22px;white-space:nowrap;overflow:hidden;color:#000;">5.03.2024</div>
<div style="position:absolute;left:446px;top:209px;width:70px;height:21px;font-size:11px;line-height:22px;white-space:nowrap;overflow:hidden;color:#000;letter-spacing:-0.4px;">Yılmazlar Ti...</div>
<div style="position:absolute;left:521px;top:209px;width:74px;height:21px;font-size:11px;line-height:22px;white-space:nowrap;overflow:hidden;color:#000;">120.08</div>
<div style="position:absolute;left:696px;top:209px;width:95px;height:21px;text-align:right;font-size:11px;line-height:22px;white-space:nowrap;color:#000;">251,69</div>
<div style="position:absolute;left:796px;top:209px;width:95px;height:21px;text-align:right;font-size:11px;line-height:22px;white-space:nowrap;color:#000;">0,00</div>
<div style="position:absolute;left:896px;top:209px;width:95px;height:21px;text-align:right;font-size:11px;line-height:22px;white-space:nowrap;color:#000;">251,69</div>
<div style="position:absolute;left:1096px;top:209px;width:95px;height:21px;text-align:right;font-size:11px;line-height:22px;white-space:nowrap;color:#000;">0,00</div>
<div style="position:absolute;left:1198px;top:209px;width:97px;height:21px;font-size:11px;line-height:22px;white-space:nowrap;overflow:hidden;color:#000;">600.20</div>
<div style="position:absolute;left:1296px;top:209px;width:95px;height:21px;text-align:right;font-size:11px;line-height:22px;white-space:nowrap;color:#000;">0,00</div>
<div style="position:absolute;left:1398px;top:209px;width:97px;height:21px;font-size:11px;line-height:22px;white-space:nowrap;overflow:hidden;color:#000;">391.20</div>
<div style="position:absolute;left:1596px;top:209px;width:95px;height:21px;text-align:right;font-size:11px;line-height:22px;white-space:nowrap;color:#000;">0,00</div>
<div style="position:absolute;left:1698px;top:209px;width:97px;height:21px;font-size:11px;line-height:22px;white-space:nowrap;overflow:hidden;color:#000;">600.18</div>
<div style="position:absolute;left:1796px;top:209px;width:95px;height:21px;text-align:right;font-size:11px;line-height:22px;white-space:nowrap;color:#000;">0,00</div>
<div style="position:absolute;left:1898px;top:209px;width:97px;height:21px;font-size:11px;line-height:22px;white-space:nowrap;overflow:hidden;color:#000;">39</div>
<div style="position:absolute;left:11px;top:231px;width:25px;height:21px;text-align:center;font-size:11px;line-height:22px;">8</div>
<div style="position:absolute;left:3px;top:252px;width:37px;height:1px;background:#a0a0a0;"></div>
<div style="position:absolute;left:41px;top:252px;width:1869px;height:1px;background:#a0a0a0;"></div>
<div style="position:absolute;left:43px;top:231px;width:97px;height:21px;font-size:11px;line-height:22px;white-space:nowrap;overflow:hidden;color:#000;">E-Fatura</div>
<div style="position:absolute;left:143px;top:231px;width:97px;height:21px;font-size:11px;line-height:22px;white-space:nowrap;overflow:hidden;color:#000;">Istisna</div>
<div style="position:absolute;left:243px;top:231px;width:100px;height:21px;font-size:11px;line-height:22px;white-space:nowrap;overflow:hidden;color:#000;">EF12024001115...</div>
<div style="position:absolute;left:346px;top:231px;width:97px;height:21px;font-size:11px;line-height:22px;white-space:nowrap;overflow:hidden;color:#000;">6.03.2024</div>
<div style="position:absolute;left:446px;top:231px;width:70px;height:21px;font-size:11px;line-height:22px;white-space:nowrap;overflow:hidden;color:#000;letter-spacing:-0.4px;">Akyüz Gıda</div>
<div style="position:absolute;left:521px;top:231px;width:74px;height:21px;font-size:11px;line-height:22px;white-space:nowrap;overflow:hidden;color:#000;">120.09</div>
<div style="position:absolute;left:696px;top:231px;width:95px;height:21px;text-align:right;font-size:11px;line-height:22px;white-space:nowrap;color:#000;">675,00</div>
<div style="position:absolute;left:796px;top:231px;width:95px;height:21px;text-align:right;font-size:11px;line-height:22px;white-space:nowrap;color:#000;">0,00</div>
<div style="position:absolute;left:896px;top:231px;width:95px;height:21px;text-align:right;font-size:11px;line-height:22px;white-space:nowrap;color:#000;">675,00</div>
<div style="position:absolute;left:1096px;top:231px;width:95px;height:21px;text-align:right;font-size:11px;line-height:22px;white-space:nowrap;color:#000;">0,00</div>
<div style="position:absolute;left:1198px;top:231px;width:97px;height:21px;font-size:11px;line-height:22px;white-space:nowrap;overflow:hidden;color:#000;">600.20</div>
<div style="position:absolute;left:1296px;top:231px;width:95px;height:21px;text-align:right;font-size:11px;line-height:22px;white-space:nowrap;color:#000;">0,00</div>
<div style="position:absolute;left:1398px;top:231px;width:97px;height:21px;font-size:11px;line-height:22px;white-space:nowrap;overflow:hidden;color:#000;">391.20</div>
<div style="position:absolute;left:1596px;top:231px;width:95px;height:21px;text-align:right;font-size:11px;line-height:22px;white-space:nowrap;color:#000;">0,00</div>
<div style="position:absolute;left:1698px;top:231px;width:97px;height:21px;font-size:11px;line-height:22px;white-space:nowrap;overflow:hidden;color:#000;">600.18</div>
<div style="position:absolute;left:1796px;top:231px;width:95px;height:21px;text-align:right;font-size:11px;line-height:22px;white-space:nowrap;color:#000;">0,00</div>
<div style="position:absolute;left:1898px;top:231px;width:97px;height:21px;font-size:11px;line-height:22px;white-space:nowrap;overflow:hidden;color:#000;">39</div>
<div style="position:absolute;left:11px;top:253px;width:25px;height:21px;text-align:center;font-size:11px;line-height:22px;">9</div>
<div style="position:absolute;left:3px;top:274px;width:37px;height:1px;background:#a0a0a0;"></div>
<div style="position:absolute;left:41px;top:274px;width:1869px;height:1px;background:#a0a0a0;"></div>
<div style="position:absolute;left:43px;top:253px;width:97px;height:21px;font-size:11px;line-height:22px;white-space:nowrap;overflow:hidden;color:#000;">E-Fatura</div>
<div style="position:absolute;left:143px;top:253px;width:97px;height:21px;font-size:11px;line-height:22px;white-space:nowrap;overflow:hidden;color:#000;">Istisna</div>
<div style="position:absolute;left:243px;top:253px;width:100px;height:21px;font-size:11px;line-height:22px;white-space:nowrap;overflow:hidden;color:#000;">EF12024001115...</div>
<div style="position:absolute;left:346px;top:253px;width:97px;height:21px;font-size:11px;line-height:22px;white-space:nowrap;overflow:hidden;color:#000;">6.03.2024</div>
<div style="position:absolute;left:446px;top:253px;width:70px;height:21px;font-size:11px;line-height:22px;white-space:nowrap;overflow:hidden;color:#000;letter-spacing:-0.4px;">Bütüner Pa...</div>
<div style="position:absolute;left:521px;top:253px;width:74px;height:21px;font-size:11px;line-height:22px;white-space:nowrap;overflow:hidden;color:#000;">120.10</div>
<div style="position:absolute;left:696px;top:253px;width:95px;height:21px;text-align:right;font-size:11px;line-height:22px;white-space:nowrap;color:#000;">150,00</div>
<div style="position:absolute;left:796px;top:253px;width:95px;height:21px;text-align:right;font-size:11px;line-height:22px;white-space:nowrap;color:#000;">0,00</div>
<div style="position:absolute;left:896px;top:253px;width:95px;height:21px;text-align:right;font-size:11px;line-height:22px;white-space:nowrap;color:#000;">150,00</div>
<div style="position:absolute;left:1096px;top:253px;width:95px;height:21px;text-align:right;font-size:11px;line-height:22px;white-space:nowrap;color:#000;">0,00</div>
<div style="position:absolute;left:1198px;top:253px;width:97px;height:21px;font-size:11px;line-height:22px;white-space:nowrap;overflow:hidden;color:#000;">600.20</div>
<div style="position:absolute;left:1296px;top:253px;width:95px;height:21px;text-align:right;font-size:11px;line-height:22px;white-space:nowrap;color:#000;">0,00</div>
<div style="position:absolute;left:1398px;top:253px;width:97px;height:21px;font-size:11px;line-height:22px;white-space:nowrap;overflow:hidden;color:#000;">391.20</div>
<div style="position:absolute;left:1596px;top:253px;width:95px;height:21px;text-align:right;font-size:11px;line-height:22px;white-space:nowrap;color:#000;">0,00</div>
<div style="position:absolute;left:1698px;top:253px;width:97px;height:21px;font-size:11px;line-height:22px;white-space:nowrap;overflow:hidden;color:#000;">600.18</div>
<div style="position:absolute;left:1796px;top:253px;width:95px;height:21px;text-align:right;font-size:11px;line-height:22px;white-space:nowrap;color:#000;">0,00</div>
<div style="position:absolute;left:1898px;top:253px;width:97px;height:21px;font-size:11px;line-height:22px;white-space:nowrap;overflow:hidden;color:#000;">39</div>
<div style="position:absolute;left:11px;top:275px;width:25px;height:21px;text-align:center;font-size:11px;line-height:22px;">10</div>
<div style="position:absolute;left:3px;top:296px;width:37px;height:1px;background:#a0a0a0;"></div>
<div style="position:absolute;left:41px;top:296px;width:1869px;height:1px;background:#a0a0a0;"></div>
<div style="position:absolute;left:43px;top:275px;width:97px;height:21px;font-size:11px;line-height:22px;white-space:nowrap;overflow:hidden;color:#000;">E-Fatura</div>
<div style="position:absolute;left:143px;top:275px;width:97px;height:21px;font-size:11px;line-height:22px;white-space:nowrap;overflow:hidden;color:#000;">Istisna</div>
<div style="position:absolute;left:243px;top:275px;width:100px;height:21px;font-size:11px;line-height:22px;white-space:nowrap;overflow:hidden;color:#000;">EF12024001115...</div>
<div style="position:absolute;left:346px;top:275px;width:97px;height:21px;font-size:11px;line-height:22px;white-space:nowrap;overflow:hidden;color:#000;">6.03.2024</div>
<div style="position:absolute;left:446px;top:275px;width:70px;height:21px;font-size:11px;line-height:22px;white-space:nowrap;overflow:hidden;color:#000;letter-spacing:-0.4px;">Polat Gıda</div>
<div style="position:absolute;left:521px;top:275px;width:74px;height:21px;font-size:11px;line-height:22px;white-space:nowrap;overflow:hidden;color:#000;">120.11</div>
<div style="position:absolute;left:696px;top:275px;width:95px;height:21px;text-align:right;font-size:11px;line-height:22px;white-space:nowrap;color:#000;">150,00</div>
<div style="position:absolute;left:796px;top:275px;width:95px;height:21px;text-align:right;font-size:11px;line-height:22px;white-space:nowrap;color:#000;">0,00</div>
<div style="position:absolute;left:896px;top:275px;width:95px;height:21px;text-align:right;font-size:11px;line-height:22px;white-space:nowrap;color:#000;">150,00</div>
<div style="position:absolute;left:1096px;top:275px;width:95px;height:21px;text-align:right;font-size:11px;line-height:22px;white-space:nowrap;color:#000;">0,00</div>
<div style="position:absolute;left:1198px;top:275px;width:97px;height:21px;font-size:11px;line-height:22px;white-space:nowrap;overflow:hidden;color:#000;">600.20</div>
<div style="position:absolute;left:1296px;top:275px;width:95px;height:21px;text-align:right;font-size:11px;line-height:22px;white-space:nowrap;color:#000;">0,00</div>
<div style="position:absolute;left:1398px;top:275px;width:97px;height:21px;font-size:11px;line-height:22px;white-space:nowrap;overflow:hidden;color:#000;">391.20</div>
<div style="position:absolute;left:1596px;top:275px;width:95px;height:21px;text-align:right;font-size:11px;line-height:22px;white-space:nowrap;color:#000;">0,00</div>
<div style="position:absolute;left:1698px;top:275px;width:97px;height:21px;font-size:11px;line-height:22px;white-space:nowrap;overflow:hidden;color:#000;">600.18</div>
<div style="position:absolute;left:1796px;top:275px;width:95px;height:21px;text-align:right;font-size:11px;line-height:22px;white-space:nowrap;color:#000;">0,00</div>
<div style="position:absolute;left:1898px;top:275px;width:97px;height:21px;font-size:11px;line-height:22px;white-space:nowrap;overflow:hidden;color:#000;">39</div>
<div style="position:absolute;left:11px;top:297px;width:25px;height:21px;text-align:center;font-size:11px;line-height:22px;">11</div>
<div style="position:absolute;left:3px;top:318px;width:37px;height:1px;background:#a0a0a0;"></div>
<div style="position:absolute;left:41px;top:318px;width:1869px;height:1px;background:#a0a0a0;"></div>
<div style="position:absolute;left:43px;top:297px;width:97px;height:21px;font-size:11px;line-height:22px;white-space:nowrap;overflow:hidden;color:#000;">E-Fatura</div>
<div style="position:absolute;left:143px;top:297px;width:97px;height:21px;font-size:11px;line-height:22px;white-space:nowrap;overflow:hidden;color:#000;">Satış</div>
<div style="position:absolute;left:243px;top:297px;width:100px;height:21px;font-size:11px;line-height:22px;white-space:nowrap;overflow:hidden;color:#000;">EF12024001115...</div>
<div style="position:absolute;left:346px;top:297px;width:97px;height:21px;font-size:11px;line-height:22px;white-space:nowrap;overflow:hidden;color:#000;">6.03.2024</div>
<div style="position:absolute;left:446px;top:297px;width:70px;height:21px;font-size:11px;line-height:22px;white-space:nowrap;overflow:hidden;color:#000;letter-spacing:-0.4px;">Deniz Plastik</div>
<div style="position:absolute;left:521px;top:297px;width:74px;height:21px;font-size:11px;line-height:22px;white-space:nowrap;overflow:hidden;color:#000;">120.12</div>
<div style="position:absolute;left:696px;top:297px;width:95px;height:21px;text-align:right;font-size:11px;line-height:22px;white-space:nowrap;color:#000;">3.416,67</div>
<div style="position:absolute;left:796px;top:297px;width:95px;height:21px;text-align:right;font-size:11px;line-height:22px;white-space:nowrap;color:#000;">683,33</div>
<div style="position:absolute;left:896px;top:297px;width:95px;height:21px;text-align:right;font-size:11px;line-height:22px;white-space:nowrap;color:#000;">4.100,00</div>
<div style="position:absolute;left:1096px;top:297px;width:95px;height:21px;text-align:right;font-size:11px;line-height:22px;white-space:nowrap;color:#000;">3.416,67</div>
<div style="position:absolute;left:1198px;top:297px;width:97px;height:21px;font-size:11px;line-height:22px;white-space:nowrap;overflow:hidden;color:#000;">600.20</div>
<div style="position:absolute;left:1296px;top:297px;width:95px;height:21px;text-align:right;font-size:11px;line-height:22px;white-space:nowrap;color:#000;">683,33</div>
<div style="position:absolute;left:1398px;top:297px;width:97px;height:21px;font-size:11px;line-height:22px;white-space:nowrap;overflow:hidden;color:#000;">391.20</div>
<div style="position:absolute;left:1596px;top:297px;width:95px;height:21px;text-align:right;font-size:11px;line-height:22px;white-space:nowrap;color:#000;">0,00</div>
<div style="position:absolute;left:1698px;top:297px;width:97px;height:21px;font-size:11px;line-height:22px;white-space:nowrap;overflow:hidden;color:#000;">600.18</div>
<div style="position:absolute;left:1796px;top:297px;width:95px;height:21px;text-align:right;font-size:11px;line-height:22px;white-space:nowrap;color:#000;">0,00</div>
<div style="position:absolute;left:1898px;top:297px;width:97px;height:21px;font-size:11px;line-height:22px;white-space:nowrap;overflow:hidden;color:#000;">39</div>
<div style="position:absolute;left:11px;top:319px;width:25px;height:21px;text-align:center;font-size:11px;line-height:22px;">12</div>
<div style="position:absolute;left:3px;top:340px;width:37px;height:1px;background:#a0a0a0;"></div>
<div style="position:absolute;left:41px;top:340px;width:1869px;height:1px;background:#a0a0a0;"></div>
<div style="position:absolute;left:43px;top:319px;width:97px;height:21px;font-size:11px;line-height:22px;white-space:nowrap;overflow:hidden;color:#000;">E-Arşiv Fatura</div>
<div style="position:absolute;left:143px;top:319px;width:97px;height:21px;font-size:11px;line-height:22px;white-space:nowrap;overflow:hidden;color:#000;">Satış</div>
<div style="position:absolute;left:243px;top:319px;width:100px;height:21px;font-size:11px;line-height:22px;white-space:nowrap;overflow:hidden;color:#000;">EA12024001115...</div>
<div style="position:absolute;left:346px;top:319px;width:97px;height:21px;font-size:11px;line-height:22px;white-space:nowrap;overflow:hidden;color:#000;">6.03.2024</div>
<div style="position:absolute;left:446px;top:319px;width:70px;height:21px;font-size:11px;line-height:22px;white-space:nowrap;overflow:hidden;color:#000;letter-spacing:-0.4px;">Kırlangıç Ki...</div>
<div style="position:absolute;left:521px;top:319px;width:74px;height:21px;font-size:11px;line-height:22px;white-space:nowrap;overflow:hidden;color:#000;">120.13</div>
<div style="position:absolute;left:696px;top:319px;width:95px;height:21px;text-align:right;font-size:11px;line-height:22px;white-space:nowrap;color:#000;">313,14</div>
<div style="position:absolute;left:796px;top:319px;width:95px;height:21px;text-align:right;font-size:11px;line-height:22px;white-space:nowrap;color:#000;">62,63</div>
<div style="position:absolute;left:896px;top:319px;width:95px;height:21px;text-align:right;font-size:11px;line-height:22px;white-space:nowrap;color:#000;">375,77</div>
<div style="position:absolute;left:1096px;top:319px;width:95px;height:21px;text-align:right;font-size:11px;line-height:22px;white-space:nowrap;color:#000;">313,14</div>
<div style="position:absolute;left:1198px;top:319px;width:97px;height:21px;font-size:11px;line-height:22px;white-space:nowrap;overflow:hidden;color:#000;">600.20</div>
<div style="position:absolute;left:1296px;top:319px;width:95px;height:21px;text-align:right;font-size:11px;line-height:22px;white-space:nowrap;color:#000;">62,63</div>
<div style="position:absolute;left:1398px;top:319px;width:97px;height:21px;font-size:11px;line-height:22px;white-space:nowrap;overflow:hidden;color:#000;">391.20</div>
<div style="position:absolute;left:1596px;top:319px;width:95px;height:21px;text-align:right;font-size:11px;line-height:22px;white-space:nowrap;color:#000;">0,00</div>
<div style="position:absolute;left:1698px;top:319px;width:97px;height:21px;font-size:11px;line-height:22px;white-space:nowrap;overflow:hidden;color:#000;">600.18</div>
<div style="position:absolute;left:1796px;top:319px;width:95px;height:21px;text-align:right;font-size:11px;line-height:22px;white-space:nowrap;color:#000;">0,00</div>
<div style="position:absolute;left:1898px;top:319px;width:97px;height:21px;font-size:11px;line-height:22px;white-space:nowrap;overflow:hidden;color:#000;">39</div>
<div style="position:absolute;left:11px;top:341px;width:25px;height:21px;text-align:center;font-size:11px;line-height:22px;">13</div>
<div style="position:absolute;left:3px;top:362px;width:37px;height:1px;background:#a0a0a0;"></div>
<div style="position:absolute;left:41px;top:362px;width:1869px;height:1px;background:#a0a0a0;"></div>
<div style="position:absolute;left:43px;top:341px;width:97px;height:21px;font-size:11px;line-height:22px;white-space:nowrap;overflow:hidden;color:#000;">E-Fatura</div>
<div style="position:absolute;left:143px;top:341px;width:97px;height:21px;font-size:11px;line-height:22px;white-space:nowrap;overflow:hidden;color:#000;">Satış</div>
<div style="position:absolute;left:243px;top:341px;width:100px;height:21px;font-size:11px;line-height:22px;white-space:nowrap;overflow:hidden;color:#000;">EF12024001115...</div>
<div style="position:absolute;left:346px;top:341px;width:97px;height:21px;font-size:11px;line-height:22px;white-space:nowrap;overflow:hidden;color:#000;">6.03.2024</div>
<div style="position:absolute;left:446px;top:341px;width:70px;height:21px;font-size:11px;line-height:22px;white-space:nowrap;overflow:hidden;color:#000;letter-spacing:-0.4px;">Durgun İnş...</div>
<div style="position:absolute;left:521px;top:341px;width:74px;height:21px;font-size:11px;line-height:22px;white-space:nowrap;overflow:hidden;color:#000;">120.14</div>
<div style="position:absolute;left:696px;top:341px;width:95px;height:21px;text-align:right;font-size:11px;line-height:22px;white-space:nowrap;color:#000;">901,67</div>
<div style="position:absolute;left:796px;top:341px;width:95px;height:21px;text-align:right;font-size:11px;line-height:22px;white-space:nowrap;color:#000;">180,33</div>
<div style="position:absolute;left:896px;top:341px;width:95px;height:21px;text-align:right;font-size:11px;line-height:22px;white-space:nowrap;color:#000;">1.082,00</div>
<div style="position:absolute;left:1096px;top:341px;width:95px;height:21px;text-align:right;font-size:11px;line-height:22px;white-space:nowrap;color:#000;">901,67</div>
<div style="position:absolute;left:1198px;top:341px;width:97px;height:21px;font-size:11px;line-height:22px;white-space:nowrap;overflow:hidden;color:#000;">600.20</div>
<div style="position:absolute;left:1296px;top:341px;width:95px;height:21px;text-align:right;font-size:11px;line-height:22px;white-space:nowrap;color:#000;">180,33</div>
<div style="position:absolute;left:1398px;top:341px;width:97px;height:21px;font-size:11px;line-height:22px;white-space:nowrap;overflow:hidden;color:#000;">391.20</div>
<div style="position:absolute;left:1596px;top:341px;width:95px;height:21px;text-align:right;font-size:11px;line-height:22px;white-space:nowrap;color:#000;">0,00</div>
<div style="position:absolute;left:1698px;top:341px;width:97px;height:21px;font-size:11px;line-height:22px;white-space:nowrap;overflow:hidden;color:#000;">600.18</div>
<div style="position:absolute;left:1796px;top:341px;width:95px;height:21px;text-align:right;font-size:11px;line-height:22px;white-space:nowrap;color:#000;">0,00</div>
<div style="position:absolute;left:1898px;top:341px;width:97px;height:21px;font-size:11px;line-height:22px;white-space:nowrap;overflow:hidden;color:#000;">39</div>
<div style="position:absolute;left:11px;top:363px;width:25px;height:21px;text-align:center;font-size:11px;line-height:22px;">14</div>
<div style="position:absolute;left:3px;top:384px;width:37px;height:1px;background:#a0a0a0;"></div>
<div style="position:absolute;left:41px;top:384px;width:1869px;height:1px;background:#a0a0a0;"></div>
<div style="position:absolute;left:43px;top:363px;width:97px;height:21px;font-size:11px;line-height:22px;white-space:nowrap;overflow:hidden;color:#000;">E-Fatura</div>
<div style="position:absolute;left:143px;top:363px;width:97px;height:21px;font-size:11px;line-height:22px;white-space:nowrap;overflow:hidden;color:#000;">Satış</div>
<div style="position:absolute;left:243px;top:363px;width:100px;height:21px;font-size:11px;line-height:22px;white-space:nowrap;overflow:hidden;color:#000;">EF12024001115...</div>
<div style="position:absolute;left:346px;top:363px;width:97px;height:21px;font-size:11px;line-height:22px;white-space:nowrap;overflow:hidden;color:#000;">7.03.2024</div>
<div style="position:absolute;left:446px;top:363px;width:70px;height:21px;font-size:11px;line-height:22px;white-space:nowrap;overflow:hidden;color:#000;letter-spacing:-0.4px;">Kaptan Ma...</div>
<div style="position:absolute;left:521px;top:363px;width:74px;height:21px;font-size:11px;line-height:22px;white-space:nowrap;overflow:hidden;color:#000;">102.01</div>
<div style="position:absolute;left:696px;top:363px;width:95px;height:21px;text-align:right;font-size:11px;line-height:22px;white-space:nowrap;color:#000;">51.478,63</div>
<div style="position:absolute;left:796px;top:363px;width:95px;height:21px;text-align:right;font-size:11px;line-height:22px;white-space:nowrap;color:#000;">10.295,73</div>
<div style="position:absolute;left:896px;top:363px;width:95px;height:21px;text-align:right;font-size:11px;line-height:22px;white-space:nowrap;color:#000;">61.774,36</div>
<div style="position:absolute;left:1096px;top:363px;width:95px;height:21px;text-align:right;font-size:11px;line-height:22px;white-space:nowrap;color:#000;">51.478,63</div>
<div style="position:absolute;left:1198px;top:363px;width:97px;height:21px;font-size:11px;line-height:22px;white-space:nowrap;overflow:hidden;color:#000;">600.20</div>
<div style="position:absolute;left:1296px;top:363px;width:95px;height:21px;text-align:right;font-size:11px;line-height:22px;white-space:nowrap;color:#000;">10.295,73</div>
<div style="position:absolute;left:1398px;top:363px;width:97px;height:21px;font-size:11px;line-height:22px;white-space:nowrap;overflow:hidden;color:#000;">391.20</div>
<div style="position:absolute;left:1596px;top:363px;width:95px;height:21px;text-align:right;font-size:11px;line-height:22px;white-space:nowrap;color:#000;">0,00</div>
<div style="position:absolute;left:1698px;top:363px;width:97px;height:21px;font-size:11px;line-height:22px;white-space:nowrap;overflow:hidden;color:#000;">600.18</div>
<div style="position:absolute;left:1796px;top:363px;width:95px;height:21px;text-align:right;font-size:11px;line-height:22px;white-space:nowrap;color:#000;">0,00</div>
<div style="position:absolute;left:1898px;top:363px;width:97px;height:21px;font-size:11px;line-height:22px;white-space:nowrap;overflow:hidden;color:#000;">39</div>
<div style="position:absolute;left:11px;top:385px;width:25px;height:21px;text-align:center;font-size:11px;line-height:22px;">15</div>
<div style="position:absolute;left:41px;top:406px;width:1869px;height:1px;background:#a0a0a0;"></div>
<div style="position:absolute;left:40px;top:77px;width:1px;height:329px;background:#a0a0a0;"></div>
<div style="position:absolute;left:140px;top:77px;width:1px;height:329px;background:#a0a0a0;"></div>
<div style="position:absolute;left:240px;top:77px;width:1px;height:329px;background:#a0a0a0;"></div>
<div style="position:absolute;left:343px;top:77px;width:1px;height:329px;background:#a0a0a0;"></div>
<div style="position:absolute;left:443px;top:77px;width:1px;height:329px;background:#a0a0a0;"></div>
<div style="position:absolute;left:516px;top:77px;width:1px;height:329px;background:#a0a0a0;"></div>
<div style="position:absolute;left:595px;top:77px;width:1px;height:329px;background:#a0a0a0;"></div>
<div style="position:absolute;left:695px;top:77px;width:1px;height:329px;background:#a0a0a0;"></div>
<div style="position:absolute;left:795px;top:77px;width:1px;height:329px;background:#a0a0a0;"></div>
<div style="position:absolute;left:895px;top:77px;width:1px;height:329px;background:#a0a0a0;"></div>
<div style="position:absolute;left:995px;top:77px;width:1px;height:329px;background:#a0a0a0;"></div>
<div style="position:absolute;left:1095px;top:77px;width:1px;height:329px;background:#a0a0a0;"></div>
<div style="position:absolute;left:1195px;top:77px;width:1px;height:329px;background:#a0a0a0;"></div>
<div style="position:absolute;left:1295px;top:77px;width:1px;height:329px;background:#a0a0a0;"></div>
<div style="position:absolute;left:1395px;top:77px;width:1px;height:329px;background:#a0a0a0;"></div>
<div style="position:absolute;left:1495px;top:77px;width:1px;height:329px;background:#a0a0a0;"></div>
<div style="position:absolute;left:1595px;top:77px;width:1px;height:329px;background:#a0a0a0;"></div>
<div style="position:absolute;left:1695px;top:77px;width:1px;height:329px;background:#a0a0a0;"></div>
<div style="position:absolute;left:1795px;top:77px;width:1px;height:329px;background:#a0a0a0;"></div>
<div style="position:absolute;left:1895px;top:77px;width:1px;height:329px;background:#a0a0a0;"></div>
<svg style="left:6px;top:83px" width="8" height="10"><path d="M1 1L5.5 5L1 9Z" fill="#333"/></svg>
<div style="position:absolute;left:8.5px;top:393.5px;width:5px;height:5px;border-radius:50%;background:#5a5a5a;"></div>
<div style="position:absolute;left:0px;top:767px;width:1910px;height:1px;background:#fff;"></div>
<div style="position:absolute;left:0px;top:768px;width:1910px;height:15px;background:#f0f0f0;"></div>
<div style="position:absolute;left:17px;top:768px;width:722px;height:15px;background:#cdcdcd;"></div>
<div style="position:absolute;left:0px;top:783px;width:1910px;height:1px;background:#fff;"></div>
<svg style="left:4px;top:771px" width="10" height="10"><path d="M6.5 1.5L3 5L6.5 8.5" fill="none" stroke="#606060" stroke-width="1.8"/></svg>
<svg style="left:1897px;top:771px" width="10" height="10"><path d="M3.5 1.5L7 5L3.5 8.5" fill="none" stroke="#606060" stroke-width="1.8"/></svg>
</div>
<div style="left:1px;top:991px;width:1499px;height:1px;background:#dadada;"></div>
<div style="left:2px;top:994px;width:90px;height:18px;border-top:1px solid #a0a0a0;border-left:1px solid #a0a0a0;border-bottom:1px solid #fff;border-right:1px solid #fff;"></div>
<div class="t" style="left:7.5px;top:995.76px;font-size:11.5px;line-height:16px;transform:scaleX(0.9422);transform-origin:0 0;">Fatura Sayısı:14</div>
<div style="left:93px;top:994px;width:72px;height:19px;background:#008000;border-bottom:1px solid #3ea03e;border-right:1px solid #3ea03e;"></div>
<div style="left:93px;top:994px;width:1px;height:19px;background:#a0a0a0;"></div>
<div class="t" style="left:101px;top:995.76px;font-size:11.5px;line-height:16px;transform:scaleX(0.9649);transform-origin:0 0;color:#fff;">Bakiye:0,00</div>
<div style="left:166px;top:994px;width:162px;height:18px;border-top:1px solid #a0a0a0;border-left:1px solid #a0a0a0;border-bottom:1px solid #fff;border-right:1px solid #fff;"></div>
<div class="t" style="left:173.3px;top:995.76px;font-size:11.5px;line-height:16px;transform:scaleX(0.9902);transform-origin:0 0;">Kdv Hariç Toplam:125.130,80</div>
<div style="left:329px;top:994px;width:126px;height:18px;border-top:1px solid #a0a0a0;border-left:1px solid #a0a0a0;border-bottom:1px solid #fff;border-right:1px solid #fff;"></div>
<div class="t" style="left:337.2px;top:995.76px;font-size:11.5px;line-height:16px;transform:scaleX(0.9873);transform-origin:0 0;">Toplam Kdv:24.780,82</div>
<div style="left:456px;top:994px;width:106px;height:18px;border-top:1px solid #a0a0a0;border-left:1px solid #a0a0a0;border-bottom:1px solid #fff;border-right:1px solid #fff;"></div>
<div class="t" style="left:464.5px;top:995.76px;font-size:11.5px;line-height:16px;transform:scaleX(0.9816);transform-origin:0 0;">Diğer Vergiler:0,00</div>
<div style="left:563px;top:994px;width:143px;height:18px;border-top:1px solid #a0a0a0;border-left:1px solid #a0a0a0;border-bottom:1px solid #fff;border-right:1px solid #fff;"></div>
<div class="t" style="left:572px;top:995.76px;font-size:11.5px;line-height:16px;transform:scaleX(0.9873);transform-origin:0 0;">Genel Toplam:149.911,62</div>
<div style="left:708px;top:994px;width:1px;height:18px;background:#a0a0a0;"></div>
<div style="left:711px;top:994px;width:1px;height:18px;background:#a0a0a0;"></div>
<div style="left:1664px;top:985px;width:128px;height:21px;border:1px solid #adadad;background:#f0f0f0;"></div>
<div style="left:1667px;top:988px;width:122px;height:15px;background:#008000;"></div>
<div class="t" style="left:1671px;top:988.06px;font-size:12.8px;line-height:16px;font-weight:bold;transform:scaleX(0.9778);transform-origin:0 0;color:#fff;">DIŞARI AKTAR - F2</div>
<div style="left:1800px;top:985px;width:115px;height:21px;border:1px solid #adadad;background:#f0f0f0;"></div>
<div style="left:1803px;top:988px;width:109px;height:15px;background:#d45b5b;"></div>
<div class="t" style="left:1813.75px;top:988.06px;font-size:12.8px;line-height:16px;font-weight:bold;transform:scaleX(0.9438);transform-origin:0 0;color:#fff;">VAZGEÇ - ESC</div>
<div style="left:1px;top:1019px;width:46px;height:17px;border-top:1px solid #a0a0a0;border-left:1px solid #a0a0a0;border-bottom:1px solid #fff;border-right:1px solid #fff;"></div>
<div class="t" style="left:6.6px;top:1020.91px;font-size:11.5px;line-height:16px;transform:scaleX(0.8874);transform-origin:0 0;">DEBUG</div>
<div style="left:49px;top:1019px;width:96px;height:17px;border-top:1px solid #a0a0a0;border-left:1px solid #a0a0a0;border-bottom:1px solid #fff;border-right:1px solid #fff;"></div>
<div class="t" style="left:54.3px;top:1020.91px;font-size:11.5px;line-height:16px;transform:scaleX(0.9598);transform-origin:0 0;">Versiyon : 5.1.0.0</div>
<div style="left:505px;top:23px;width:283px;height:21px;background:#f0f0f0;"></div>
<div style="left:505px;top:44px;width:283px;height:1px;background:#707070;"></div>
<div style="left:505px;top:25px;width:68px;height:20px;background:#fcfcfc;border-top:1px solid #707070;border-right:1px solid #707070;"></div>
<svg style="left:505.5px;top:28px" width="15" height="15" viewBox="0 0 15 15"><path d="M1.8 1.6L9 8.7" stroke="#000" stroke-width="1.3" stroke-linecap="round"/><path d="M9.6 9.3L13 12.8" stroke="#000" stroke-width="2.6" stroke-linecap="round"/><path d="M5.2 10.6L10.6 5.2" stroke="#000" stroke-width="1.9"/><path d="M14.09 3.78A2.1 2.1 0 1 1 11.82 1.51" fill="none" stroke="#000" stroke-width="1.7"/><path d="M1.91 11.72A2.1 2.1 0 1 1 4.18 13.99" fill="none" stroke="#000" stroke-width="1.7"/></svg>
<div class="t" style="left:524.6px;top:26.81px;font-size:11.5px;line-height:16px;">Araçlar</div>
<svg style="left:578px;top:28px" width="15" height="15"><circle cx="7.3" cy="7" r="6.1" fill="none" stroke="#000" stroke-width="1.3"/><path d="M5.2 5.3a2.1 2.1 0 1 1 2.7 2c-0.5 0.2 -0.6 0.5 -0.6 1.3" fill="none" stroke="#000" stroke-width="1.4"/><circle cx="7.3" cy="10.4" r="0.9" fill="#000"/></svg>
<div class="t" style="left:596.2px;top:26.71px;font-size:11.5px;line-height:16px;transform:scaleX(1.005);transform-origin:0 0;">Yardım</div>
<div style="left:505px;top:45px;width:283px;height:66px;background:#fcfcfc;box-shadow:3px 3px 4px rgba(0,0,0,0.18);"></div>
<div style="left:505px;top:46px;width:21px;height:43px;background:#f0f0f0;"></div>
<svg style="left:506px;top:50px" width="15" height="15" viewBox="0 0 15 15"><path d="M1.8 1.6L9 8.7" stroke="#000" stroke-width="1.3" stroke-linecap="round"/><path d="M9.6 9.3L13 12.8" stroke="#000" stroke-width="2.6" stroke-linecap="round"/><path d="M5.2 10.6L10.6 5.2" stroke="#000" stroke-width="1.9"/><path d="M14.09 3.78A2.1 2.1 0 1 1 11.82 1.51" fill="none" stroke="#000" stroke-width="1.7"/><path d="M1.91 11.72A2.1 2.1 0 1 1 4.18 13.99" fill="none" stroke="#000" stroke-width="1.7"/></svg>
<div class="t" style="left:537.3px;top:49.01px;font-size:11.5px;line-height:16px;transform:scaleX(0.9662);transform-origin:0 0;">Seçenekler</div>
<svg style="left:506px;top:70px" width="18" height="18"><path d="M2.8 6.8V1.9H10.8L15.6 6.6V16.3H8" fill="none" stroke="#000" stroke-width="1.1"/><path d="M10.8 1.9V6.6H15.6" fill="none" stroke="#000" stroke-width="1"/><circle cx="4.4" cy="12.9" r="4.4" fill="#111"/><path d="M2.1 12.9H6.7M4.4 10.6V15.2" stroke="#fff" stroke-width="1.3"/></svg>
<div class="t" style="left:537.3px;top:70.71px;font-size:11.5px;line-height:16px;transform:scaleX(1.0075);transform-origin:0 0;">Fatura Türü Tanımlama</div>
<div style="left:505px;top:93px;width:283px;height:17px;background:#b5d7f3;"></div>
<svg style="left:507px;top:92px" width="16" height="17"><circle cx="6.5" cy="7" r="5" fill="none" stroke="#000" stroke-width="1"/><path d="M10 10.5L14.5 15" stroke="#000" stroke-width="1.4"/></svg>
<div class="t" style="left:537.3px;top:92.71px;font-size:11.5px;line-height:16px;transform:scaleX(1.0128);transform-origin:0 0;">Akıllı Cari Kod Bulma - Gözardı Kelimeler</div>
<div style="left:502px;top:20px;width:289px;height:95px;border:3px solid #c2005b;border-bottom-width:5px;"></div>
<div style="left:786.5px;top:93px;width:2px;height:17px;background:#c2005b;"></div>
<div style="left:505px;top:90px;width:283px;height:3px;background:#c2005b;"></div>
<div style="left:707px;top:70px;width:125px;height:107px;border:3px solid #c2005b;"></div>
<div style="left:520px;top:183px;width:81px;height:387px;border:3px solid #c2005b;"></div>
<div style="left:808px;top:70px;width:24px;height:24px;border-radius:50%;background:#d63f7f;border:1px solid #fff;"></div>
<div class="t" style="left:808.5px;top:72px;width:24px;text-align:center;font-weight:bold;font-size:17px;line-height:19px;color:#fff;transform:scaleX(0.9);">5</div>
</body></html>
